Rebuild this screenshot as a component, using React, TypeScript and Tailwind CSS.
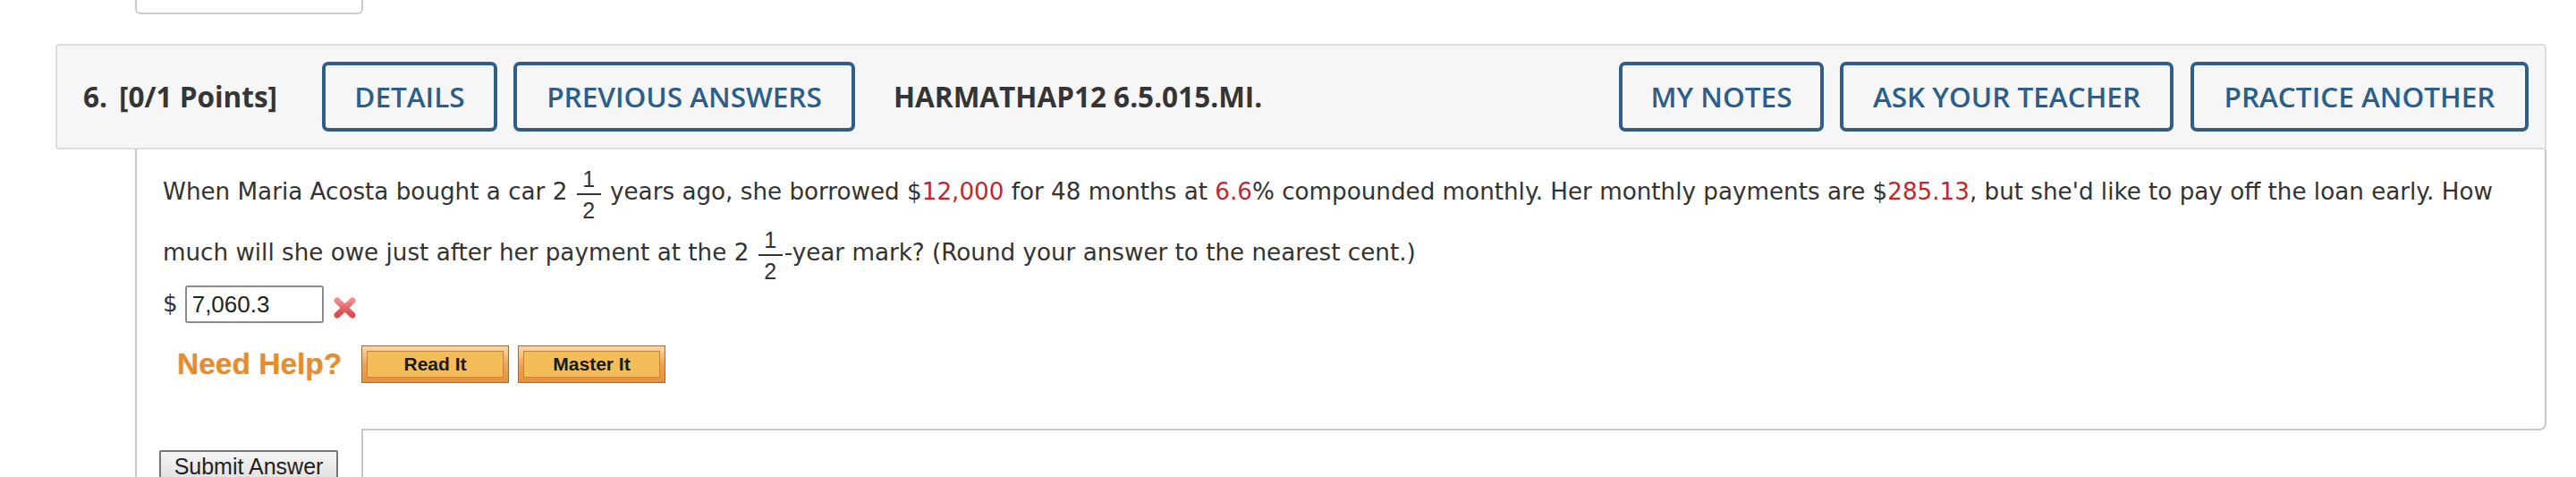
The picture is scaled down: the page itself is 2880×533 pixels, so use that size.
import React from "react";

function HBtn({ w, children }: { w: string; children: React.ReactNode }) {
  return (
    <div
      className={`${w} h-[78px] shrink-0 border-4 border-[#2f5e88] rounded-[7px] flex items-center justify-center text-[31.5px] font-semibold text-[#2c5e8c] whitespace-nowrap`}
    >
      {children}
    </div>
  );
}

function Frac() {
  return (
    <span className="inline-flex flex-col items-center align-[14px] mx-[2px] font-['Liberation_Sans',Arial,sans-serif] text-[25px] leading-[25px] text-[#333]">
      <span>1</span>
      <span className="mt-[3px] mb-[5px] w-[27px] h-[2px] bg-[#333]" />
      <span>2</span>
    </span>
  );
}

function Red({ children }: { children: React.ReactNode }) {
  return <span className="text-[#c4262e]">{children}</span>;
}

function OrangeBtn({ label }: { label: string }) {
  return (
    <div className="w-[165px] h-[42px] shrink-0 border border-[#8f6f45] bg-linear-to-b from-[#fbd9a4] via-[#eea352] to-[#e8913c] p-[5px]">
      <div className="w-full h-full border border-[#c38637] bg-[#f4bd5a] flex items-center justify-center font-['Liberation_Sans',Arial,sans-serif] font-bold text-[21px] text-[#1a1a1a]">
        {label}
      </div>
    </div>
  );
}

export default function App() {
  return (
    <div className="w-[2880px] h-[533px] bg-white overflow-hidden">
      {/* previous question's submit box bottom */}
      <div className="ml-[151px] w-[255px] h-[16px] border-x-2 border-b-2 border-[#cccccc] rounded-b-[6px]" />

      {/* header */}
      <div className="mt-[33px] ml-[62px] w-[2785px] h-[118px] bg-[#f6f6f6] border-2 border-[#dddddd] rounded-[4px] flex items-center pl-[29px] pr-[18px] font-['Open_Sans',sans-serif]">
        <div className="w-[267px] shrink-0 text-[31.5px] font-bold text-[#353535] whitespace-nowrap">
          <span>6.</span>
          <span className="ml-[13px]">[0/1 Points]</span>
        </div>
        <HBtn w="w-[196px]">DETAILS</HBtn>
        <div className="ml-[18px]">
          <HBtn w="w-[382px]">PREVIOUS ANSWERS</HBtn>
        </div>
        <div className="ml-[43px] text-[31.5px] font-bold text-[#353535] whitespace-nowrap">
          HARMATHAP12 6.5.015.MI.
        </div>
        <div className="flex-1" />
        <HBtn w="w-[229px]">MY NOTES</HBtn>
        <div className="ml-[18px]">
          <HBtn w="w-[373px]">ASK YOUR TEACHER</HBtn>
        </div>
        <div className="ml-[19px]">
          <HBtn w="w-[378px]">PRACTICE ANOTHER</HBtn>
        </div>
      </div>

      {/* content */}
      <div className="ml-[151px] w-[2696px]">
        <div className="h-[314px] border-x-2 border-b-2 border-[#c8c8c8] rounded-br-[8px] pl-[29px] pt-[21px] font-['DejaVu_Sans',Verdana,sans-serif] text-[26.2px] text-[#333]">
          <div className="h-[68px] whitespace-nowrap leading-[30px]">
            When Maria Acosta bought a car 2 <Frac /> years ago, she borrowed $<Red>12,000</Red> for 48 months at{" "}
            <Red>6.6</Red>% compounded monthly. Her monthly payments are $<Red>285.13</Red>, but she'd like to pay off
            the loan early. How
          </div>
          <div className="h-[63px] whitespace-nowrap leading-[30px]">
            much will she owe just after her payment at the 2 <Frac />-year mark? (Round your answer to the nearest
            cent.)
          </div>
          <div className="h-[42px] flex items-center">
            <span className="mr-[8px]">$</span>
            <div className="w-[155px] h-[42px] border-2 border-[#8a8a8a] rounded-[3px] pl-[6px] flex items-center font-['Liberation_Sans',Arial,sans-serif] text-[26px] text-[#222]">
              7,060.3
            </div>
            <svg className="ml-[10px] mt-[8px]" width="27" height="26" viewBox="0 0 27 26">
              <defs>
                <linearGradient id="xg" x1="0" y1="0" x2="0" y2="1">
                  <stop offset="0" stopColor="#f08c8c" />
                  <stop offset="0.5" stopColor="#e36666" />
                  <stop offset="1" stopColor="#d85050" />
                </linearGradient>
              </defs>
              <path d="M5 5 L22 21 M22 5 L5 21" stroke="url(#xg)" strokeWidth="7" strokeLinecap="round" fill="none" />
            </svg>
          </div>
          <div className="mt-[25px] h-[42px] flex items-center pl-[16px]">
            <div className="w-[206px] shrink-0 font-['Liberation_Sans',Arial,sans-serif] font-bold text-[33.5px] text-[#e38d33] whitespace-nowrap [text-shadow:0_0_2px_#f6c48e]">
              Need Help?
            </div>
            <OrangeBtn label="Read It" />
            <div className="ml-[10px]">
              <OrangeBtn label="Master It" />
            </div>
          </div>
        </div>
        <div className="-mt-[2px] w-[255px] h-[60px] bg-white border-x-2 border-[#c8c8c8] pl-[25px] pt-[24px]">
          <div className="w-[200px] h-[42px] border-2 border-[#777] rounded-[2px] bg-linear-to-b from-[#f5f5f5] to-[#dcdcdc] flex justify-center items-start pt-[4px] font-['Liberation_Sans',Arial,sans-serif] text-[25px] leading-none text-[#222] whitespace-nowrap">
            Submit Answer
          </div>
        </div>
      </div>
    </div>
  );
}
